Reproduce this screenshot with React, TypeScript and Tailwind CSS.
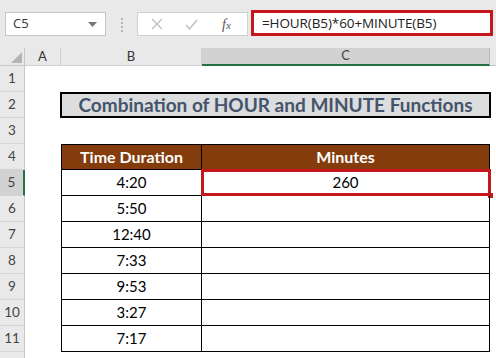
import React from 'react';

const times = ['4:20', '5:50', '12:40', '7:33', '9:53', '3:27', '7:17'];

const RowHead: React.FC<{ n?: number; active?: boolean }> = ({ n, active }) => (
  <div
    className={
      'flex items-center justify-center border-b border-[#d4d4d4] text-[13.5px] text-[#444] ' +
      (active ? 'bg-[#d2d2d2] border-r-2 border-r-[#217346]' : 'bg-[#e9e9e9] border-r border-r-[#c6c6c6]')
    }
  >
    {n}
  </div>
);

const App: React.FC = () => {
  return (
    <div className="w-[496px] h-[358px] overflow-hidden bg-white font-['Lato','Liberation_Sans',sans-serif]">
      {/* formula bar */}
      <div className="h-[48px] bg-[#e9e9e9] flex items-start pt-[10px] pl-[5px] font-['Open_Sans','Liberation_Sans',sans-serif]">
        <div className="mt-[2px] w-[101px] h-[24px] bg-white border border-[#c6c6c6] flex items-center justify-between px-[7px]">
          <span className="text-[13px] text-[#333]">C5</span>
          <svg width="9" height="5" viewBox="0 0 9 5" className="mr-[1px]">
            <path d="M0 0 L9 0 L4.5 5 Z" fill="#777" />
          </svg>
        </div>
        <div className="w-[31px] flex justify-center mt-[8px]">
          <div className="flex flex-col gap-[2px]">
            {[0, 1, 2, 3].map((i) => (
              <div key={i} className="w-[2px] h-[2px] bg-[#b5b5b5]" />
            ))}
          </div>
        </div>
        <div className="mt-[2px] w-[111px] h-[24px] bg-white border border-[#d0d0d0] flex items-center">
          <svg width="12" height="12" viewBox="0 0 12 12" className="ml-[13px]">
            <path d="M1 1 L11 11 M11 1 L1 11" stroke="#bdbdbd" strokeWidth="1.4" />
          </svg>
          <svg width="13" height="11" viewBox="0 0 13 11" className="ml-[22px]">
            <path d="M1 6 L4.5 10 L12 1" stroke="#bdbdbd" strokeWidth="1.4" fill="none" />
          </svg>
          <span className="ml-[24px] text-[14px] italic text-[#555] font-['Liberation_Serif',serif]">
            f<span className="text-[11px]">x</span>
          </span>
        </div>
        <div className="ml-[3px] w-[242px] h-[26px] bg-white border-[3px] border-[#c4161c] flex items-center pl-[8px]">
          <span className="text-[13.5px] text-[#222] tracking-[-0.1px]">=HOUR(B5)*60+MINUTE(B5)</span>
        </div>
      </div>

      {/* sheet */}
      <div className="grid grid-cols-[25px_36px_141px_288px_6px] grid-rows-[18px_repeat(12,26px)]">
        {/* column headers */}
        <div className="bg-[#e9e9e9] border-r border-b border-[#c6c6c6] flex items-end justify-end p-[2px]">
          <svg width="11" height="11" viewBox="0 0 11 11">
            <path d="M11 0 L11 11 L0 11 Z" fill="#b4b4b4" />
          </svg>
        </div>
        <div className="bg-[#e9e9e9] border-r border-b border-[#d0d0d0] flex items-center justify-center text-[13px] text-[#333]">A</div>
        <div className="bg-[#e9e9e9] border-r border-b border-[#d0d0d0] flex items-center justify-center text-[13px] text-[#333]">B</div>
        <div className="bg-[#d2d2d2] border-r border-r-[#b8b8b8] border-b-2 border-b-[#217346] flex items-center justify-center text-[13px] text-[#444]">C</div>
        <div className="bg-[#e9e9e9] border-b border-[#c6c6c6]" />

        {/* row 1 */}
        <RowHead n={1} />
        <div className="col-span-4" />

        {/* row 2 - title */}
        <RowHead n={2} />
        <div />
        <div className="col-span-2 border-2 border-black bg-[#dcdddf] flex items-center justify-center text-[19px] font-bold text-[#44546a] -mx-[1px]">
          Combination of HOUR and MINUTE Functions
        </div>
        <div />

        {/* row 3 */}
        <RowHead n={3} />
        <div className="col-span-4" />

        {/* row 4 - table header */}
        <RowHead n={4} />
        <div />
        <div className="bg-[#843c0c] border border-black flex items-center justify-center text-[16px] font-bold text-white">
          Time Duration
        </div>
        <div className="bg-[#843c0c] border-y border-r border-black flex items-center justify-center text-[16px] font-bold text-white">
          Minutes
        </div>
        <div />

        {times.map((t, i) => (
          <React.Fragment key={t + i}>
            <RowHead n={i + 5} active={i === 0} />
            <div />
            <div className="border-x border-b border-black flex items-center justify-center text-[15px] text-black">
              {t}
            </div>
            <div className="relative border-r border-b border-black flex items-center justify-center text-[15px] text-black">
              {i === 0 && (
                <>
                  260
                  <div className="absolute -left-[1px] -top-[1px] -right-[2px] -bottom-[1px] border-[3px] border-[#c4161c]" />
                  <div className="absolute -right-[4px] -bottom-[3px] w-[5px] h-[5px] bg-[#c4161c]" />
                </>
              )}
            </div>
            <div />
          </React.Fragment>
        ))}

        {/* row 12, only its top edge shows */}
        <RowHead />
        <div className="col-span-4" />
      </div>
    </div>
  );
};

export default App;
